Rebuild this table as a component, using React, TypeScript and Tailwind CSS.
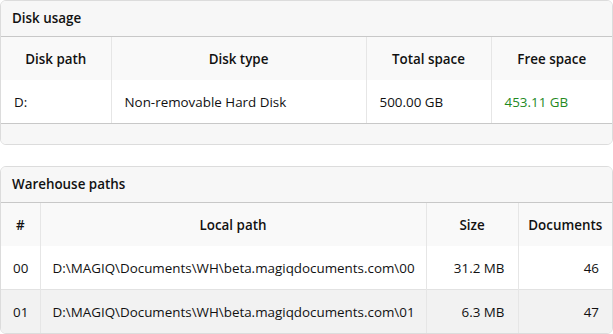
import React from "react";

const font = { fontFamily: '"Segoe UI", "Open Sans", "Noto Sans", sans-serif' };

export default function App() {
  return (
    <div className="w-[613px] h-[334px] overflow-hidden bg-white text-[13.4px] text-[#111]" style={font}>
      <div className="border border-[#dcdcdc] rounded-[6px] overflow-hidden">
        <div className="h-[36px] flex items-center px-[11px] bg-[#f7f7f7] border-b border-[#c8c8c8] font-semibold">
          Disk usage
        </div>
        <table className="w-full border-collapse table-fixed">
          <colgroup>
            <col className="w-[110px]" />
            <col className="w-[255px]" />
            <col className="w-[125px]" />
            <col />
          </colgroup>
          <thead>
            <tr className="h-[43px] bg-[#f9f9f9]">
              <th className="font-semibold text-center pt-[1px]">Disk path</th>
              <th className="font-semibold text-center pt-[1px] border-l border-[#e6e6e6]">Disk type</th>
              <th className="font-semibold text-center pt-[1px] border-l border-[#e6e6e6]">Total space</th>
              <th className="font-semibold text-center pt-[1px] border-l border-[#e6e6e6]">Free space</th>
            </tr>
          </thead>
          <tbody>
            <tr className="h-[43px] bg-white">
              <td className="px-[13px] pt-[1px]">D:</td>
              <td className="px-[13px] pt-[1px] border-l border-[#e6e6e6]">Non-removable Hard Disk</td>
              <td className="px-[13px] pt-[1px] border-l border-[#e6e6e6]">500.00 GB</td>
              <td className="px-[13px] pt-[1px] border-l border-[#e6e6e6] text-[#1f8a1f]">453.11 GB</td>
            </tr>
          </tbody>
        </table>
        <div className="h-[21px] bg-[#f7f7f7] border-t border-[#c8c8c8]" />
      </div>

      <div className="mt-[21px] border border-[#dcdcdc] rounded-[6px] overflow-hidden">
        <div className="h-[36px] flex items-center px-[11px] bg-[#f7f7f7] border-b border-[#c8c8c8] font-semibold">
          Warehouse paths
        </div>
        <table className="w-full border-collapse table-fixed">
          <colgroup>
            <col className="w-[39px]" />
            <col className="w-[386px]" />
            <col className="w-[92px]" />
            <col />
          </colgroup>
          <thead>
            <tr className="h-[43px] bg-[#f9f9f9]">
              <th className="font-semibold text-center pt-[1px]">#</th>
              <th className="font-semibold text-center pt-[1px] border-l border-[#e6e6e6]">Local path</th>
              <th className="font-semibold text-center pt-[1px] border-l border-[#e6e6e6]">Size</th>
              <th className="font-semibold text-center pt-[1px] border-l border-[#e6e6e6]">Documents</th>
            </tr>
          </thead>
          <tbody>
            <tr className="h-[43px] bg-white">
              <td className="px-[12px] pt-[1px]">00</td>
              <td className="px-[12px] pt-[1px] border-l border-[#e6e6e6] whitespace-nowrap">D:\MAGIQ\Documents\WH\beta.magiqdocuments.com\00</td>
              <td className="px-[13px] pt-[1px] border-l border-[#e6e6e6] text-right">31.2 MB</td>
              <td className="px-[13px] pt-[1px] border-l border-[#e6e6e6] text-right">46</td>
            </tr>
            <tr className="h-[44px] bg-[#f2f2f2] border-t border-[#e2e2e2]">
              <td className="px-[12px] pt-[1px]">01</td>
              <td className="px-[12px] pt-[1px] border-l border-[#e6e6e6] whitespace-nowrap">D:\MAGIQ\Documents\WH\beta.magiqdocuments.com\01</td>
              <td className="px-[13px] pt-[1px] border-l border-[#e6e6e6] text-right">6.3 MB</td>
              <td className="px-[13px] pt-[1px] border-l border-[#e6e6e6] text-right">47</td>
            </tr>
          </tbody>
        </table>
      </div>
    </div>
  );
}
